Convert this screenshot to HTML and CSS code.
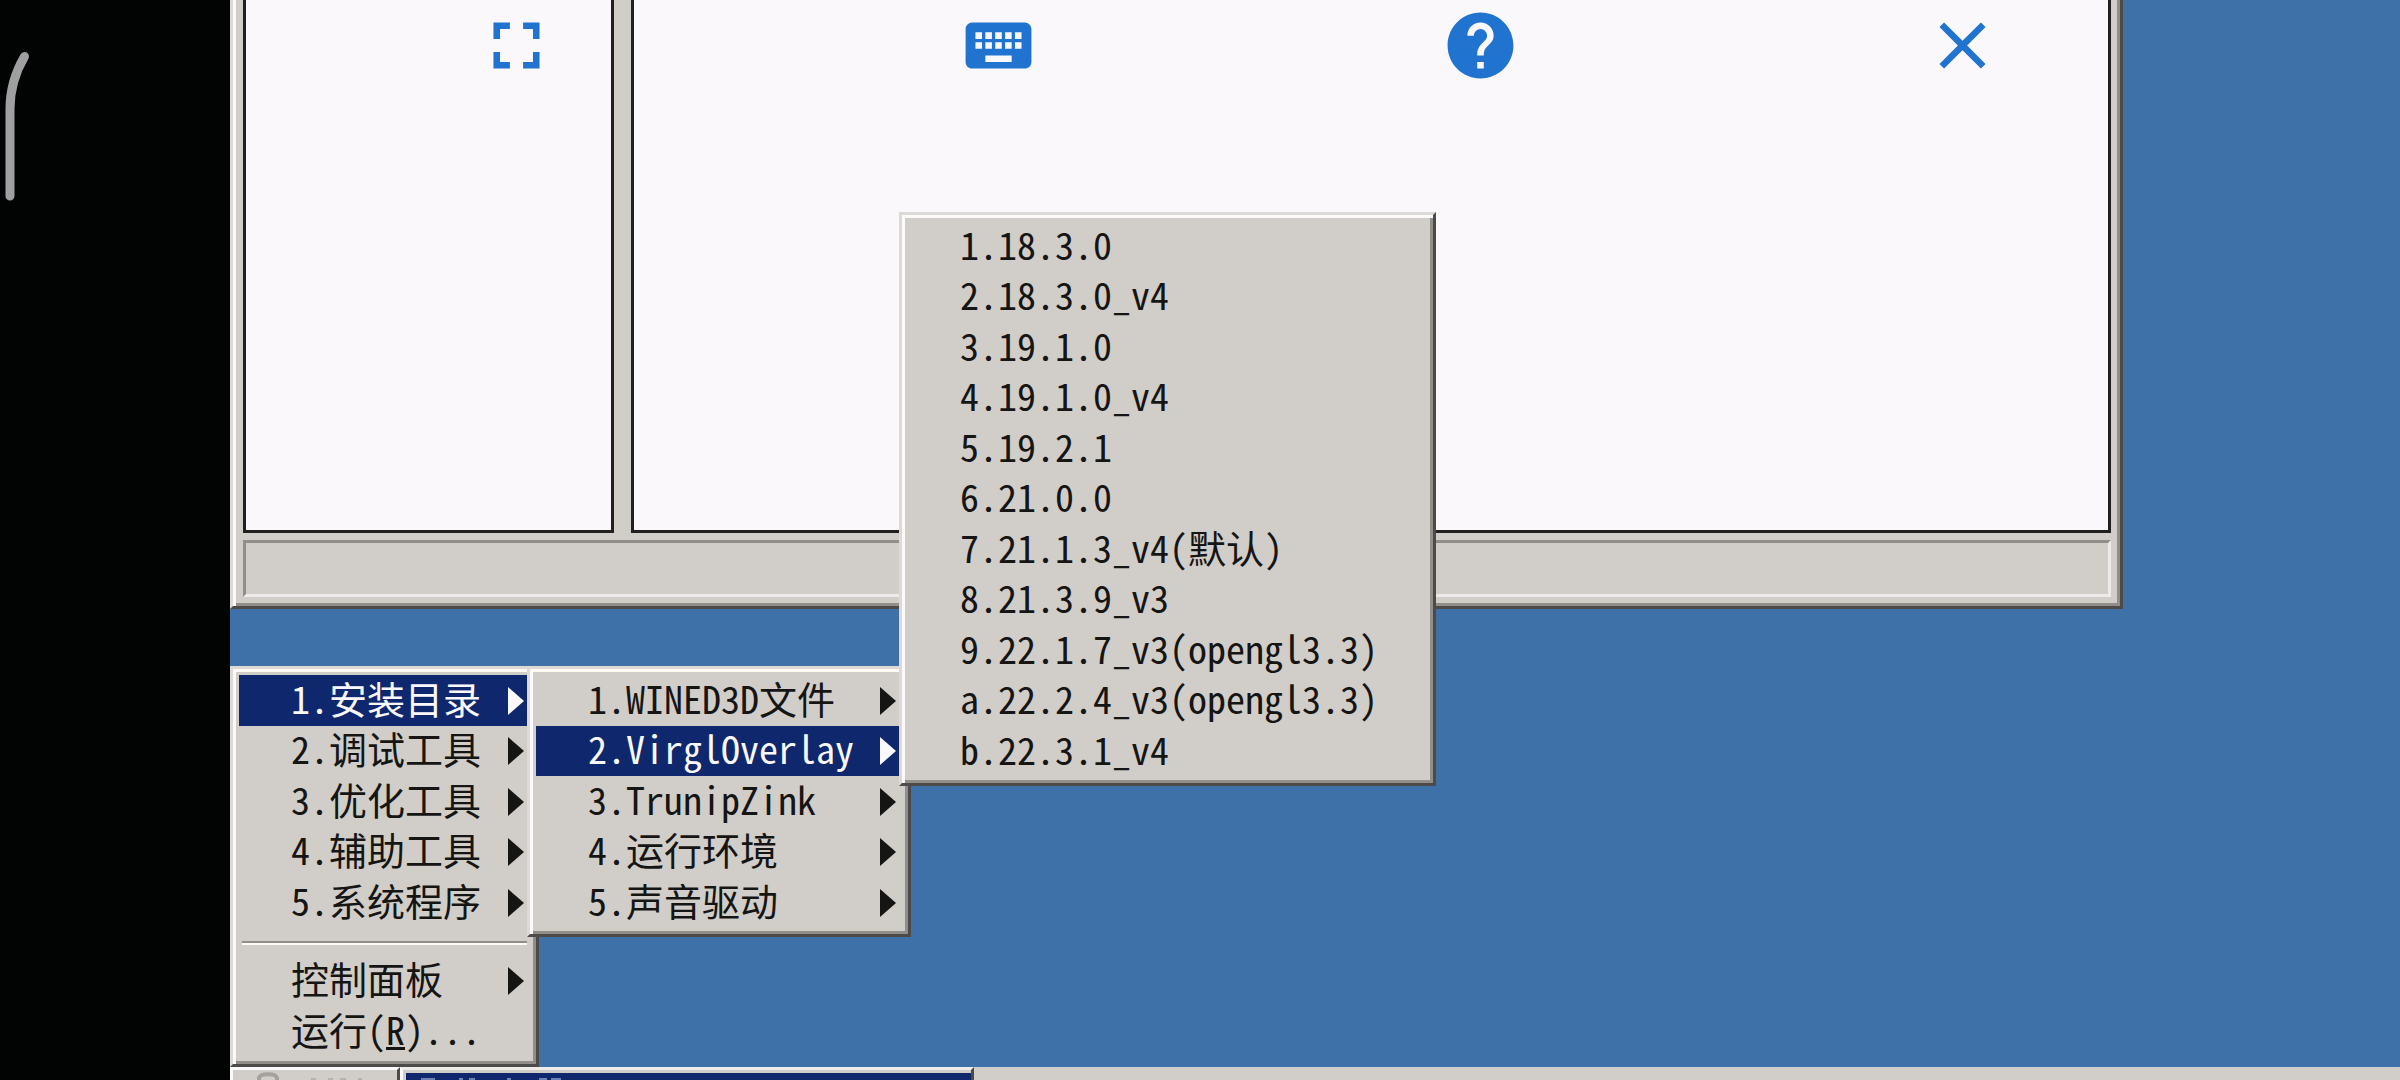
FILE: index.html
```
<!DOCTYPE html>
<html lang="zh-CN">
<head>
<meta charset="utf-8">
<title>Desktop</title>
<link rel="stylesheet" href="styles.css">
</head>
<body>
<div class="screen">
  <aside class="edge">
    <svg class="edge-handle" width="40" height="220" viewBox="0 0 40 220" aria-hidden="true">
      <path d="M10 196V109C10 87 16 71 24.500 56.500" fill="none" stroke="#9f9ea1" stroke-width="9" stroke-linecap="round"/>
    </svg>
  </aside>

  <main class="desktop">
    <section class="window">
      <div class="panes">
        <div class="pane pane-tree"></div>
        <div class="pane pane-list"></div>
      </div>
      <div class="status"></div>
    </section>

    <footer class="taskbar">
      <button class="task task-start" type="button" aria-label="Start">
        <svg width="120" height="10" viewBox="0 0 120 10" aria-hidden="true">
          <path d="M10 10V8C11 3 27 3 28 8V10" fill="none" stroke="#a5a29d" stroke-width="4"/>
          <path d="M62 9h5M79 9h5M91 9h6M109 9h4" stroke="#b5b2ad" stroke-width="2"/>
        </svg>
      </button>
      <button class="task task-window" type="button" aria-label="Window">
        <svg width="180" height="7" viewBox="0 0 180 7" aria-hidden="true">
          <path d="M18 6h14M56 6h4M66 6h6M104 6h4M136 6h8M148 6h10" stroke="#6f80b4" stroke-width="2"/>
        </svg>
      </button>
    </footer>

    <nav class="menu menu-root">
      <button class="item is-open" type="button"><span>1.安装目录</span><i class="arrow"></i></button>
      <button class="item" type="button"><span>2.调试工具</span><i class="arrow"></i></button>
      <button class="item" type="button"><span>3.优化工具</span><i class="arrow"></i></button>
      <button class="item" type="button"><span>4.辅助工具</span><i class="arrow"></i></button>
      <button class="item" type="button"><span>5.系统程序</span><i class="arrow"></i></button>
      <hr class="separator">
      <button class="item" type="button"><span>控制面板</span><i class="arrow"></i></button>
      <button class="item" type="button"><span>运行(<u>R</u>)...</span></button>
    </nav>

    <nav class="menu menu-install">
      <button class="item" type="button"><span>1.WINED3D文件</span><i class="arrow"></i></button>
      <button class="item is-open" type="button"><span>2.VirglOverlay</span><i class="arrow"></i></button>
      <button class="item" type="button"><span>3.TrunipZink</span><i class="arrow"></i></button>
      <button class="item" type="button"><span>4.运行环境</span><i class="arrow"></i></button>
      <button class="item" type="button"><span>5.声音驱动</span><i class="arrow"></i></button>
    </nav>

    <nav class="menu menu-versions">
      <button class="item" type="button"><span>1.18.3.0</span></button>
      <button class="item" type="button"><span>2.18.3.0_v4</span></button>
      <button class="item" type="button"><span>3.19.1.0</span></button>
      <button class="item" type="button"><span>4.19.1.0_v4</span></button>
      <button class="item" type="button"><span>5.19.2.1</span></button>
      <button class="item" type="button"><span>6.21.0.0</span></button>
      <button class="item" type="button"><span>7.21.1.3_v4(默认)</span></button>
      <button class="item" type="button"><span>8.21.3.9_v3</span></button>
      <button class="item" type="button"><span>9.22.1.7_v3(opengl3.3)</span></button>
      <button class="item" type="button"><span>a.22.2.4_v3(opengl3.3)</span></button>
      <button class="item" type="button"><span>b.22.3.1_v4</span></button>
    </nav>
  </main>

  <div class="tools">
    <button class="tool" type="button" aria-label="Fullscreen">
      <svg viewBox="0 0 24 24"><path d="M7 14H5v5h5v-2H7zM5 10h2V7h3V5H5zM17 17h-3v2h5v-5h-2zM14 5v2h3v3h2V5z"/></svg>
    </button>
    <button class="tool" type="button" aria-label="Keyboard">
      <svg viewBox="0 0 24 24"><path d="M20 5H4c-1.100 0-1.990.9-1.990 2L2 17c0 1.100.9 2 2 2h16c1.100 0 2-.9 2-2V7c0-1.100-.9-2-2-2zm-9 3h2v2h-2V8zm0 3h2v2h-2v-2zM8 8h2v2H8V8zm0 3h2v2H8v-2zm-1 2H5v-2h2v2zm0-3H5V8h2v2zm9 7H8v-2h8v2zm0-4h-2v-2h2v2zm0-3h-2V8h2v2zm3 3h-2v-2h2v2zm0-3h-2V8h2v2z"/></svg>
    </button>
    <button class="tool" type="button" aria-label="Help">
      <svg viewBox="0 0 24 24"><path d="M12 2C6.480 2 2 6.480 2 12s4.480 10 10 10 10-4.480 10-10S17.520 2 12 2zm1 17h-2v-2h2v2zm2.070-7.750l-.9.920C13.450 12.900 13 13.500 13 15h-2v-.5c0-1.100.450-2.100 1.170-2.830l1.240-1.260c.370-.360.590-.860.590-1.410 0-1.100-.9-2-2-2s-2 .9-2 2H8c0-2.210 1.790-4 4-4s4 1.790 4 4c0 .880-.360 1.680-.930 2.250z"/></svg>
    </button>
    <button class="tool" type="button" aria-label="Close">
      <svg viewBox="0 0 24 24"><path d="M19 6.410L17.590 5 12 10.590 6.410 5 5 6.410 10.590 12 5 17.590 6.410 19 12 13.410 17.590 19 19 17.590 13.410 12z"/></svg>
    </button>
  </div>
</div>
</body>
</html>
```
FILE: styles.css
```
:root {
  --face: #d1cdc8;
  --light: #fbf9fa;
  --edge-light: #dcd9d6;
  --shade: #918e8a;
  --dark: #4c4b4a;
  --ink: #151514;
  --select: #0f276d;
  --desktop: #3f71a9;
  --paper: #faf8fb;
  --tool: #2074cf;
}

* {
  box-sizing: border-box;
}

body {
  margin: 0;
  background: #020303;
}

button {
  margin: 0;
  padding: 0;
  border: 0;
  background: none;
  color: inherit;
  font: inherit;
}

.screen {
  position: relative;
  display: grid;
  grid-template-columns: 230px 1fr;
  min-height: 100vh;
  overflow: hidden;
}

.edge-handle {
  display: block;
}

.desktop {
  position: relative;
  display: flex;
  flex-direction: column;
  background: var(--desktop);
}

/* Window behind the menus */
.window {
  margin-right: 277px;
  padding: 0 9px 9px 10px;
  border: 3px solid;
  border-top: 0;
  border-color: var(--edge-light) var(--dark) var(--dark) var(--edge-light);
  background: var(--face);
  box-shadow: inset 3px 0 var(--light), inset -3px -3px var(--shade);
}

.panes {
  display: flex;
  gap: 17px;
  height: 533px;
}

.pane {
  border: 3px solid #20201f;
  border-top: 0;
  background: var(--paper);
}

.pane-tree {
  flex: none;
  width: 371px;
}

.pane-list {
  flex: 1;
}

.status {
  height: 57px;
  margin-top: 7px;
  border: 3px solid;
  border-color: var(--shade) #edeaea #edeaea var(--shade);
}

/* Taskbar */
.taskbar {
  display: flex;
  height: 13px;
  margin-top: auto;
  overflow: hidden;
  background: var(--face);
}

.task {
  display: flex;
  align-items: flex-start;
  height: 40px;
  border: 3px solid;
  border-color: var(--light) var(--dark) var(--dark) var(--light);
}

.task-start {
  width: 170px;
  padding: 0 16px;
}

.task-window {
  width: 574px;
  padding-top: 3px;
  border-top-color: #eeecea;
  background: var(--select);
  box-shadow: inset 0 3px var(--face), inset 3px 0 var(--face);
}

/* Cascading menus */
.menu {
  position: absolute;
  padding: 6px;
  border: 3px solid;
  border-color: var(--edge-light) var(--dark) var(--dark) var(--edge-light);
  background: var(--face);
  box-shadow: inset 3px 3px var(--light), inset -3px -3px var(--shade);
  color: var(--ink);
  font-family: "Noto Sans Mono CJK SC", "Noto Sans CJK SC", monospace;
  font-feature-settings: "hwid";
  font-size: 38px;
  line-height: 44px;
}

.menu-root {
  bottom: 13px;
  left: 0;
  width: 309px;
  padding-bottom: 7px;
}

.menu-install {
  top: 666px;
  left: 297px;
  width: 384px;
}

.menu-versions {
  top: 212px;
  left: 669px;
  width: 537px;
}

.item {
  display: flex;
  align-items: center;
  justify-content: space-between;
  width: 100%;
  height: 50px;
  padding: 0 6px 0 52px;
  text-align: left;
  white-space: nowrap;
}

.item:nth-of-type(odd) {
  height: 51px;
}

.item span {
  padding-bottom: 6px;
}

.item.is-open {
  background: var(--select);
  color: var(--paper);
}

.arrow {
  border: solid transparent;
  border-width: 14px 0 14px 16px;
  border-left-color: currentColor;
}

.separator {
  height: 4px;
  margin: 13px 3px 11px;
  border: 0;
  border-top: 2px solid var(--shade);
  background: var(--light);
}

.item u {
  text-decoration-thickness: 3px;
}

/* Floating tool row */
.tools {
  position: absolute;
  top: 6px;
  right: 197px;
  left: 275px;
  display: flex;
  pointer-events: none;
}

.tool {
  display: flex;
  flex: 1;
  justify-content: center;
  pointer-events: auto;
}

.tool svg {
  width: 79px;
  height: 79px;
  fill: var(--tool);
}
```
